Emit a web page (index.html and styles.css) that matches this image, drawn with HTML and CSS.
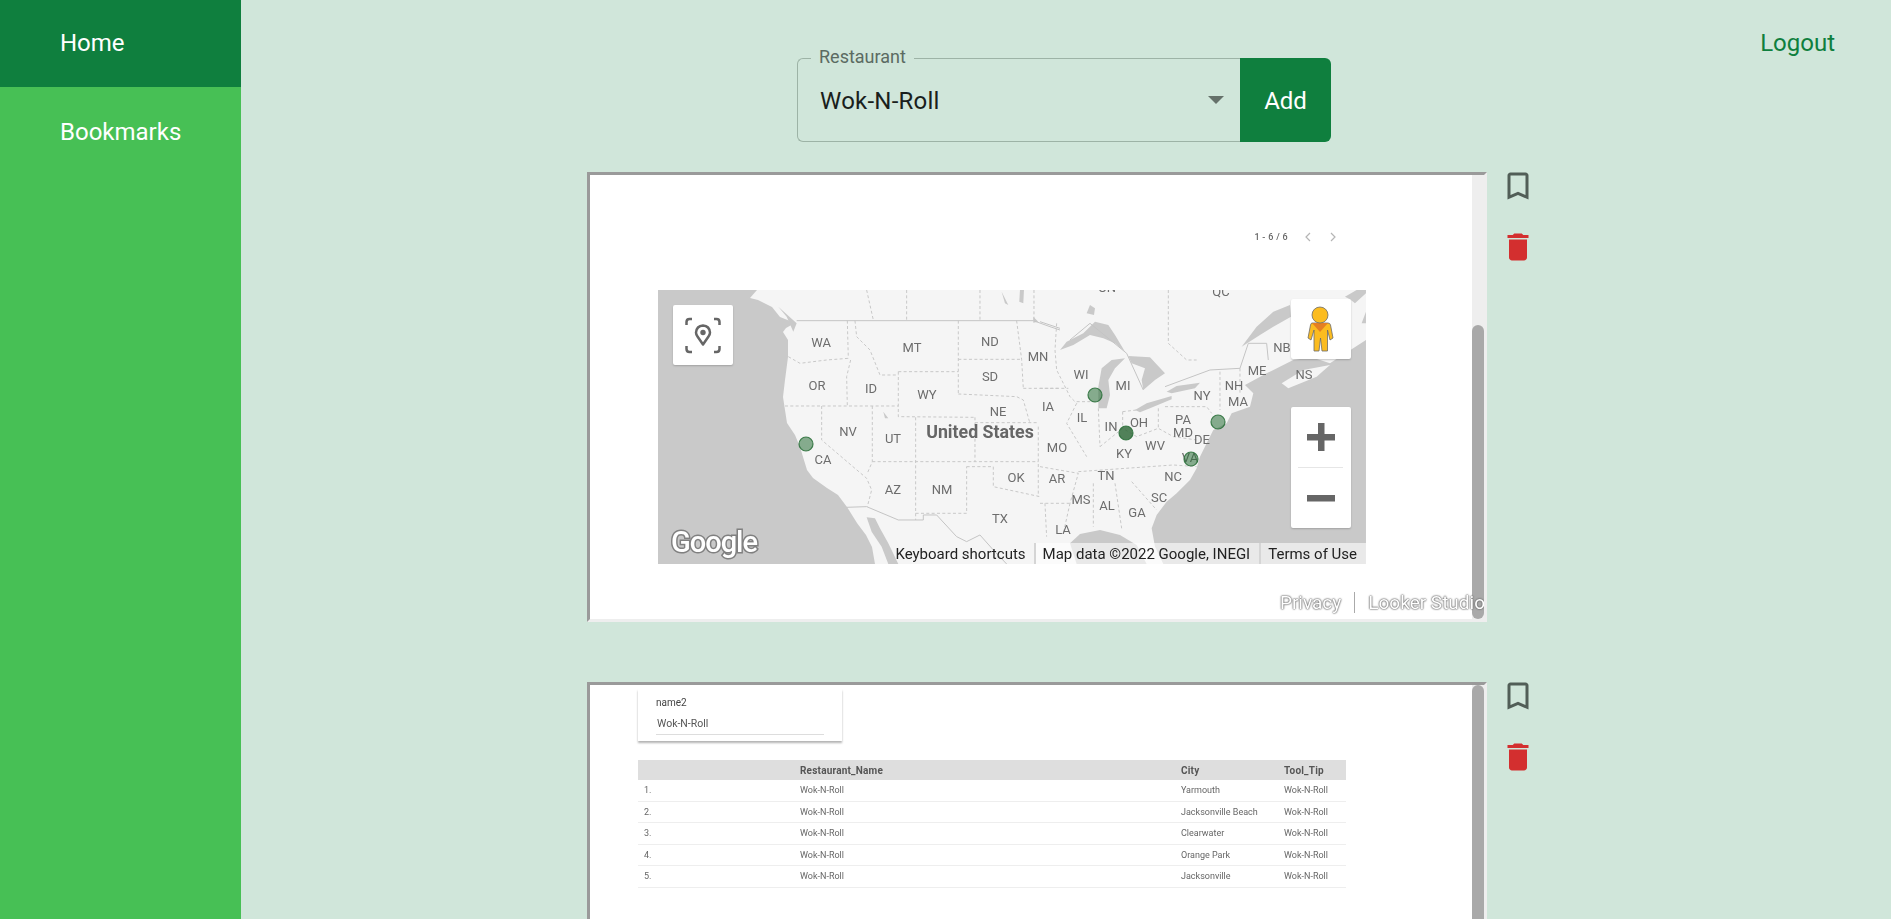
FILE: index.html
```html
<!DOCTYPE html>
<html lang="en">
<head>
    <meta charset="UTF-8">
    <title>Restaurants</title>
    <link rel="stylesheet" href="styles.css">
</head>
<body>
    <div class="sidebar">
        <a class="nav-item active" href="#">Home</a>
        <a class="nav-item" href="#">Bookmarks</a>
    </div>

    <div class="main">
        <div class="topbar">
            <div></div>
            <div class="picker">
                <div class="select-field">
                    <span class="select-label">Restaurant</span>
                    <span class="select-value">Wok-N-Roll</span>
                    <span class="select-arrow"></span>
                </div>
                <button class="add-button">Add</button>
            </div>
            <a class="logout" href="#">Logout</a>
        </div>

        <div class="report-row">
            <div class="frame">
                <div class="report report-map">
                    <div class="pager">
                        <span class="pager-text">1 - 6 / 6</span>
                        <svg class="pager-arrow" viewBox="0 0 10 12"><path d="M7 2 3 6l4 4"/></svg>
                        <svg class="pager-arrow" viewBox="0 0 10 12"><path d="M3 2l4 4-4 4"/></svg>
                    </div>

                    <div class="map">
                        <svg class="map-canvas" viewBox="0 0 708 274">
                            <rect width="708" height="274" fill="#f5f5f5"/>
                            <!-- coast, west side -->
                            <path class="water" d="M0 0H99L92 8 100 10 114 17 122 27 137 33 128 38 125 42 130 50 130 67 127 90 125 107 129 133 137 145 142 157 149 180 155 188 169 198 180 205 189 217 199 233 208 245 214 257 217 274H0Z"/>
                            <g transform="translate(-18 -10) scale(.3333)">
                                <path class="water" d="M680 712 705 715 720 745 745 790 775 852H745L725 800 695 755Z"/>
                                <path class="water" d="M730 395 745 415 735 415ZM1085 35 1105 75 1095 70ZM1140 30H1152L1150 70 1138 65ZM1180 110 1195 125 1180 128ZM415 80 470 130 460 155 440 110Z"/>
                                <path class="dash" d="M445 230 480 250 560 240 625 235M622 122 625 235M645 122 650 170 690 210 720 285 775 285M632 240 620 290 622 378M435 378H775M545 378V480L680 595 695 630 682 680M697 378V545L682 580M775 275H955M775 275V410L1005 412M955 122V340M955 238H1145M955 342 1130 350 1150 360 1170 430M827 412V720M1005 412V545M697 545H1195M1005 428H1195M980 560H1060V620L1200 650M827 700H980V560M1195 440V650M1150 325H1260M1130 122 1145 238 1150 325M1215 670 1220 770M680 30 700 120M800 30V122M1020 30V122M1182 30V120"/>
                                <path class="border" d="M470 122H1180L1230 140 1260 150M620 682 680 680 775 720H850V705H890L950 770 980 785 1020 765 1060 810 1100 852"/>
                            </g>
                            <!-- coast, east side and lakes -->
                            <g transform="translate(382 -10) scale(.3333)">
                                <path class="water" d="M978 852H370L345 800 335 745 350 705 380 665 410 640 450 600 470 565 480 530 500 490 520 450 560 430 575 400 630 380 640 340 615 315 680 280 730 255 760 240 815 232 870 250 978 180Z"/>
                                <path class="land" d="M725 310 790 270 870 255 830 290 745 325Z"/>
                                <path class="water" d="M90 790 120 762 180 750 240 765 290 795 320 852H110Z"/>
                                <path class="water" d="M605 200 650 140 700 95 750 75 753 110 700 140 660 165ZM915 50 950 30H978V40L945 70 930 58ZM965 130 978 95V130Z"/>
                                <path class="lake" d="M60 210 80 185 130 160 165 125 205 135 225 165 255 215 225 190 190 175 150 165 100 195Z"/>
                                <path class="lake" d="M175 385V320L185 265 215 240 255 235 225 265 205 300 210 345 200 385Z"/>
                                <path class="lake" d="M265 228 330 232 375 280 345 300 310 330 305 300 315 265 275 250Z"/>
                                <path class="lake" d="M285 390 320 370 395 348V358L330 385 300 397Z"/>
                                <path class="lake" d="M380 335 410 318 480 308 465 325 395 340Z"/>
                                <path class="lake" d="M140 100 150 75 165 85 162 105Z"/>
                                <path class="dash" d="M45 210 50 270 90 350 110 370M0 325H85M110 365H175M110 370 80 430 140 530M175 385 180 500M248 395V445M248 395 290 390M355 385V445M115 575 400 555 470 560M160 610V740M225 610 245 745M0 560 115 580 90 670M0 670H90M375 380H500L515 400M540 275V390M600 265V340M275 605 350 690M385 30V190L440 240H470M180 500 248 445 290 470 355 445 400 470 470 480M90 670 70 760M50 130 45 210"/>
                                <path class="border" d="M375 320 510 270 600 265 625 190H680L685 240M0 125 60 145M90 180 150 130 260 220 310 330"/>
                            </g>

                            <text class="state" x="163" y="57">WA</text>
                            <text class="state" x="254" y="62">MT</text>
                            <text class="state" x="332" y="56">ND</text>
                            <text class="state" x="380" y="71">MN</text>
                            <text class="state" x="159" y="100">OR</text>
                            <text class="state" x="213" y="103">ID</text>
                            <text class="state" x="269" y="109">WY</text>
                            <text class="state" x="332" y="91">SD</text>
                            <text class="state" x="390" y="121">IA</text>
                            <text class="state" x="340" y="126">NE</text>
                            <text class="state" x="190" y="146">NV</text>
                            <text class="state" x="235" y="153">UT</text>
                            <text class="state" x="165" y="174">CA</text>
                            <text class="state" x="399" y="162">MO</text>
                            <text class="state" x="358" y="192">OK</text>
                            <text class="state" x="399" y="193">AR</text>
                            <text class="state" x="235" y="204">AZ</text>
                            <text class="state" x="284" y="204">NM</text>
                            <text class="state" x="342" y="233">TX</text>
                            <text class="state" x="405" y="244">LA</text>
                            <text class="state" x="423" y="89">WI</text>
                            <text class="state" x="465" y="100">MI</text>
                            <text class="state" x="424" y="132">IL</text>
                            <text class="state" x="453" y="141">IN</text>
                            <text class="state" x="481" y="137">OH</text>
                            <text class="state" x="466" y="168">KY</text>
                            <text class="state" x="497" y="160">WV</text>
                            <text class="state" x="525" y="134">PA</text>
                            <text class="state" x="525" y="147">MD</text>
                            <text class="state" x="544" y="154">DE</text>
                            <text class="state" x="532" y="172">VA</text>
                            <text class="state" x="544" y="110">NY</text>
                            <text class="state" x="576" y="100">NH</text>
                            <text class="state" x="580" y="116">MA</text>
                            <text class="state" x="599" y="85">ME</text>
                            <text class="state" x="624" y="62">NB</text>
                            <text class="state" x="646" y="89">NS</text>
                            <text class="state" x="515" y="191">NC</text>
                            <text class="state" x="448" y="190">TN</text>
                            <text class="state" x="423" y="214">MS</text>
                            <text class="state" x="449" y="220">AL</text>
                            <text class="state" x="479" y="227">GA</text>
                            <text class="state" x="501" y="212">SC</text>
                            <text class="state" x="449" y="2">ON</text>
                            <text class="state" x="563" y="6">QC</text>
                            <text class="country" x="322" y="148">United States</text>

                            <circle class="dot" cx="148" cy="154" r="7"/>
                            <circle class="dot" cx="437" cy="105" r="7"/>
                            <circle class="dot dot-dark" cx="468" cy="143" r="7"/>
                            <circle class="dot" cx="560" cy="132" r="7"/>
                            <circle class="dot" cx="533" cy="169" r="7"/>

                            <text class="google" x="13" y="262">Google</text>
                        </svg>

                        <div class="map-button locate">
                            <svg viewBox="0 0 60 60" width="60" height="60">
                                <path class="locate-corners" d="M13.500 20v-3q0-3 3-3h2.500M41 14h2.500q3 0 3 3v3M46.500 41v3q0 3-3 3H41M19 47h-2.500q-3 0-3-3v-3"/>
                                <path class="locate-outline" d="M30 39.500 24.500 31.500Q23 29.500 23 27.500 23.500 21 30 20.500 36.500 21 37 27.500 37 29.500 35.500 31.500Z"/>
                                <circle class="locate-dot" cx="30" cy="27.500" r="2.700"/>
                            </svg>
                        </div>

                        <div class="map-button pegman">
                            <svg viewBox="0 0 60 60" width="60" height="60">
                                <path class="pegman-body" d="M21 24H37Q39 24 39.500 26L42 39 39 41 36.500 31V52H31L29.500 39 28 52H23V31L20 41 17 39 19.500 26Q20 24 21 24Z"/>
                                <path class="pegman-neck" d="M21 24H37L29 33Z"/>
                                <circle class="pegman-head" cx="29" cy="16" r="8"/>
                            </svg>
                        </div>

                        <div class="map-button zoom-control">
                            <svg viewBox="0 0 60 121" width="60" height="121">
                                <path class="zoom-mark" d="M16 27H27V16H33.500V27H44V33.500H33.500V44H27V33.500H16ZM16 88H44V94.500H16Z"/>
                                <path class="zoom-line" d="M7 60.500H52"/>
                            </svg>
                        </div>

                        <div class="attribution">
                            <span class="attribution-item first">Keyboard shortcuts</span>
                            <span class="attribution-item">Map data ©2022 Google, INEGI</span>
                            <span class="attribution-item">Terms of Use</span>
                        </div>
                    </div>

                    <div class="report-footer">
                        <span>Privacy</span>
                        <span class="footer-line"></span>
                        <span>Looker Studio</span>
                    </div>
                </div>
                <div class="scrollbar"><div class="thumb thumb-low"></div></div>
            </div>
            <div class="row-actions">
                <button class="icon-button bookmark">
                    <svg viewBox="0 0 24 24" width="36" height="36"><path d="M17 3H7c-1.100 0-1.990.9-1.990 2L5 21l7-3 7 3V5c0-1.100-.9-2-2-2zm0 15l-5-2.180L7 18V5h10v13z"/></svg>
                </button>
                <button class="icon-button trash">
                    <svg viewBox="0 0 24 24" width="36" height="36"><path d="M6 19c0 1.100.9 2 2 2h8c1.100 0 2-.9 2-2V7H6v12zM19 4h-3.500l-1-1h-5l-1 1H5v2h14V4z"/></svg>
                </button>
            </div>
        </div>

        <div class="report-row">
            <div class="frame">
                <div class="report report-table">
                    <div class="filter-card">
                        <div class="filter-name">name2</div>
                        <div class="filter-value">Wok-N-Roll</div>
                    </div>
                    <table class="data-table">
                        <thead>
                            <tr><th></th><th>Restaurant_Name</th><th>City</th><th>Tool_Tip</th></tr>
                        </thead>
                        <tbody>
                            <tr><td>1.</td><td>Wok-N-Roll</td><td>Yarmouth</td><td>Wok-N-Roll</td></tr>
                            <tr><td>2.</td><td>Wok-N-Roll</td><td>Jacksonville Beach</td><td>Wok-N-Roll</td></tr>
                            <tr><td>3.</td><td>Wok-N-Roll</td><td>Clearwater</td><td>Wok-N-Roll</td></tr>
                            <tr><td>4.</td><td>Wok-N-Roll</td><td>Orange Park</td><td>Wok-N-Roll</td></tr>
                            <tr><td>5.</td><td>Wok-N-Roll</td><td>Jacksonville</td><td>Wok-N-Roll</td></tr>
                        </tbody>
                    </table>
                </div>
                <div class="scrollbar"><div class="thumb"></div></div>
            </div>
            <div class="row-actions">
                <button class="icon-button bookmark">
                    <svg viewBox="0 0 24 24" width="36" height="36"><path d="M17 3H7c-1.100 0-1.990.9-1.990 2L5 21l7-3 7 3V5c0-1.100-.9-2-2-2zm0 15l-5-2.180L7 18V5h10v13z"/></svg>
                </button>
                <button class="icon-button trash">
                    <svg viewBox="0 0 24 24" width="36" height="36"><path d="M6 19c0 1.100.9 2 2 2h8c1.100 0 2-.9 2-2V7H6v12zM19 4h-3.500l-1-1h-5l-1 1H5v2h14V4z"/></svg>
                </button>
            </div>
        </div>
    </div>
</body>
</html>
```

FILE: styles.css
```css
body {
    margin: 0;
    height: 100vh;
    overflow: hidden;
    display: flex;
    font-family: Roboto, "Liberation Sans", sans-serif;
    background-color: #d0e6da;
}

.sidebar {
    width: 241px;
    flex-shrink: 0;
    background-color: #47c055;
}
.nav-item {
    display: flex;
    align-items: center;
    box-sizing: border-box;
    height: 87px;
    padding: 2px 0 0 60px;
    font-size: 24px;
    color: #fff;
    text-decoration: none;
}
.nav-item.active {
    padding: 0 0 2px 60px;
    background-color: #0f7f3e;
}

.main {
    flex: 1;
    min-width: 0;
}

.topbar {
    display: grid;
    grid-template-columns: 1fr auto 1fr;
    padding: 58px 56px 0 52px;
}
.logout {
    justify-self: end;
    margin-top: -29px;
    line-height: 28px;
    font-size: 24px;
    color: #0f7f3e;
    text-decoration: none;
}

.picker {
    display: flex;
    width: 534px;
    height: 84px;
}
.select-field {
    position: relative;
    flex: 1;
    display: flex;
    align-items: center;
    justify-content: space-between;
    padding: 2px 16px 0 22px;
    border: 1px solid #9db3a6;
    border-right: none;
    border-radius: 6px 0 0 6px;
}
.select-label {
    position: absolute;
    top: -13px;
    left: 13px;
    padding: 0 8px;
    font-size: 18px;
    line-height: 21px;
    color: #5b6b62;
    background-color: #d0e6da;
}
.select-value {
    font-size: 24px;
    letter-spacing: .225px;
    color: #1a1f1c;
}
.select-arrow {
    width: 0;
    height: 0;
    margin-bottom: 2px;
    border-left: 8px solid transparent;
    border-right: 8px solid transparent;
    border-top: 8px solid #65716a;
}
.add-button {
    width: 91px;
    padding: 2px 0 0;
    border: none;
    border-radius: 0 6px 6px 0;
    font-family: inherit;
    font-size: 24px;
    color: #fff;
    background-color: #0f7f3e;
}

.report-row {
    display: flex;
    justify-content: center;
    gap: 7px;
    margin-top: 30px;
    margin-bottom: 60px;
    padding-right: 3px;
}
.report-row + .report-row {
    margin-top: 0;
}

.frame {
    display: flex;
    flex-shrink: 0;
    box-sizing: border-box;
    width: 900px;
    height: 450px;
    overflow: hidden;
    background-color: #fff;
    border: 3px solid;
    border-color: #9a9a9a #eee #eee #9a9a9a;
}
.report {
    position: relative;
    z-index: 1;
    flex: 1;
    min-width: 0;
    filter: blur(.35px);
}
.scrollbar {
    width: 12px;
    background-color: #eee;
}
.thumb {
    height: 100%;
    border-radius: 6px;
    background-color: #a9a9a9;
}
.thumb-low {
    height: 294px;
    margin-top: 150px;
}

.row-actions {
    display: flex;
    flex-direction: column;
    gap: 13px;
    margin-top: -10px;
}
.icon-button {
    width: 48px;
    height: 48px;
    padding: 6px;
    border: none;
    background: none;
}
.icon-button svg {
    display: block;
}
.bookmark svg {
    fill: #515e57;
}
.trash svg {
    fill: #d32f2f;
}

.report-map {
    padding-top: 56px;
}
.pager {
    display: flex;
    justify-content: flex-end;
    align-items: center;
    height: 12px;
    padding-right: 131px;
    gap: 9px;
}
.pager-text {
    margin-right: 3px;
    font-size: 9px;
    font-weight: 500;
    letter-spacing: .3px;
    color: #666;
}
.pager-arrow {
    width: 16px;
    height: 12px;
    fill: none;
    stroke: #b5b5b5;
    stroke-width: 1.200;
}

.map {
    position: relative;
    width: 708px;
    height: 274px;
    margin: 47px 0 0 68px;
}
.map-canvas {
    display: block;
    width: 708px;
    height: 274px;
    background-color: #c9c9c9;
}
.water, .lake {
    fill: #c9c9c9;
}
.land {
    fill: #f5f5f5;
}
.dash {
    fill: none;
    stroke: #c8c8c8;
    stroke-width: 3;
    stroke-dasharray: 9 7;
}
.border {
    fill: none;
    stroke: #c4c4c4;
    stroke-width: 3;
}
.state {
    font-size: 13px;
    text-anchor: middle;
    fill: #6d6d6d;
}
.country {
    font-size: 17.800px;
    font-weight: 700;
    text-anchor: middle;
    fill: #666;
}
.dot {
    fill: rgba(40, 110, 55, .55);
    stroke: rgba(40, 110, 55, .85);
    stroke-width: 1.200;
}
.dot-dark {
    fill: rgba(40, 100, 50, .8);
}
.google {
    font-size: 29px;
    font-weight: 500;
    letter-spacing: -1px;
    fill: #fff;
    stroke: #808080;
    stroke-width: 3;
    paint-order: stroke;
}

.map-button {
    position: absolute;
    width: 60px;
    border-radius: 2px;
    background-color: #fff;
    box-shadow: 0 1px 2px rgba(0, 0, 0, .2);
}
.map-button svg {
    display: block;
}
.locate {
    top: 15px;
    left: 15px;
    height: 60px;
}
.locate-corners, .locate-outline {
    fill: none;
    stroke: #666;
    stroke-width: 2.500;
    stroke-linejoin: round;
}
.locate-dot {
    fill: #666;
}
.pegman {
    top: 9px;
    right: 15px;
    height: 60px;
}
.pegman-body {
    fill: #fbbc20;
    stroke: #6b6b6b;
    stroke-width: .8;
}
.pegman-neck {
    fill: #e57f22;
}
.pegman-head {
    fill: #fbbc20;
    stroke: #6b6b6b;
    stroke-width: .8;
}
.zoom-control {
    top: 117px;
    right: 15px;
    height: 121px;
}
.zoom-mark {
    fill: #666;
}
.zoom-line {
    stroke: #e6e6e6;
}

.attribution {
    position: absolute;
    right: 0;
    bottom: 0;
    display: flex;
    height: 21px;
    line-height: 22px;
    font-size: 15px;
    color: #222;
}
.attribution-item {
    padding: 0 9px 0 7px;
    border-left: 2px solid #d5d5d5;
    background-color: rgba(255, 255, 255, .6);
}
.attribution-item.first {
    padding: 0 8px 0 0;
    border-left: none;
    background: none;
}

.report-footer {
    display: flex;
    justify-content: flex-end;
    align-items: center;
    gap: 13px;
    height: 24px;
    margin: 26px -13px 0 0;
    font-size: 19px;
    color: #fff;
    text-shadow: 0 0 1px #666, 0 0 2px #666, 0 0 2px #888;
}
.footer-line {
    width: 1px;
    height: 21px;
    background-color: #aaa;
}

.report-table {
    padding: 4px 0 0 48px;
    filter: blur(.45px);
}
.filter-card {
    box-sizing: border-box;
    width: 204px;
    height: 52px;
    padding: 7px 18px 0 18px;
    font-size: 10px;
    box-shadow: 0 2px 2px rgba(0, 0, 0, .3);
}
.filter-name {
    height: 21px;
    line-height: 14px;
    color: #444;
}
.filter-value {
    height: 17px;
    padding-left: 1px;
    line-height: 14px;
    font-size: 10.500px;
    color: #555;
    border-bottom: 1px solid #ddd;
}
.data-table {
    width: 708px;
    margin-top: 19px;
    border-collapse: collapse;
    table-layout: fixed;
    font-size: 9px;
}
.data-table th {
    height: 20px;
    padding: 0;
    text-align: left;
    font-size: 10px;
    font-weight: 700;
    letter-spacing: .2px;
    color: #555;
    background-color: #dedede;
}
.data-table td {
    height: 20.500px;
    padding: 0;
    color: #666;
    border-bottom: 1px solid #eee;
}
.data-table th:nth-child(1), .data-table td:nth-child(1) {
    width: 156px;
    padding-left: 6px;
}
.data-table th:nth-child(2), .data-table td:nth-child(2) {
    width: 381px;
}
.data-table th:nth-child(3), .data-table td:nth-child(3) {
    width: 103px;
}
```
